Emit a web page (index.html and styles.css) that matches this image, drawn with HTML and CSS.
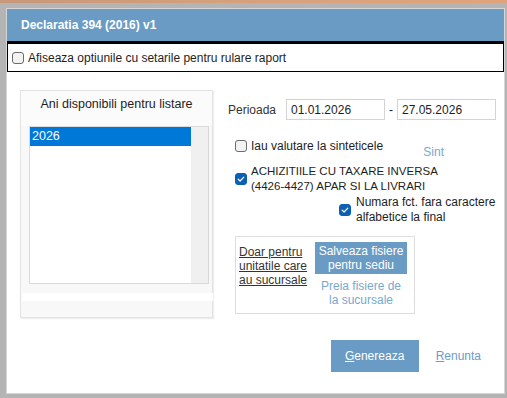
FILE: index.html
```html
<!DOCTYPE html>
<html lang="ro">
<head>
    <meta charset="UTF-8">
    <meta name="viewport" content="width=device-width, initial-scale=1.0">
    <title>Declaratia 394 (2016) v1</title>
    <link rel="stylesheet" href="styles.css">
</head>
<body>
    <div class="desk-strip"></div>
    <div class="window">
        <div class="titlebar">Declaratia 394 (2016) v1</div>

        <div class="options-row">
            <span class="cb"></span>
            <span>Afiseaza optiunile cu setarile pentru rulare raport</span>
        </div>

        <div class="dialog-body">
            <div class="main">
                <div class="years-panel">
                    <div class="panel-title">Ani disponibili pentru listare</div>
                    <div class="listbox">
                        <div class="list-items">
                            <div class="list-item selected">2026</div>
                        </div>
                        <div class="scroll-track"></div>
                    </div>
                    <div class="panel-strip"></div>
                </div>

                <div class="settings">
                    <div class="period-row">
                        <span class="period-label">Perioada</span>
                        <input class="date-input" type="text" value="01.01.2026">
                        <span class="dash">-</span>
                        <input class="date-input" type="text" value="27.05.2026">
                    </div>

                    <div class="check-row first">
                        <span class="cb"></span>
                        <span>Iau valutare la sinteticele</span>
                        <span class="sint">Sint</span>
                    </div>

                    <div class="check-row caps">
                        <span class="cb checked">
                            <svg viewBox="0 0 12 12" width="12" height="12"><path d="M3.2 6.2 L5.1 8 L8.8 4.2" fill="none" stroke="#fff" stroke-width="1.2" stroke-linecap="round" stroke-linejoin="round"/></svg>
                        </span>
                        <span>ACHIZITIILE CU TAXARE INVERSA<br>(4426-4427) APAR SI LA LIVRARI</span>
                    </div>

                    <div class="check-row numbering">
                        <span class="cb checked">
                            <svg viewBox="0 0 12 12" width="12" height="12"><path d="M3.2 6.2 L5.1 8 L8.8 4.2" fill="none" stroke="#fff" stroke-width="1.2" stroke-linecap="round" stroke-linejoin="round"/></svg>
                        </span>
                        <span>Numara fct. fara caractere<br>alfabetice la final</span>
                    </div>

                    <div class="branch-box">
                        <div class="branch-note">Doar pentru unitatile care au sucursale</div>
                        <div class="branch-actions">
                            <div class="save-btn">Salveaza fisiere<br>pentru sediu</div>
                            <div class="fetch-link">Preia fisiere de<br>la sucursale</div>
                        </div>
                    </div>
                </div>
            </div>

            <div class="actions">
                <button class="primary" type="button"><u>G</u>enereaza</button>
                <span class="cancel"><u>R</u>enunta</span>
            </div>
        </div>
    </div>
</body>
</html>
```

FILE: styles.css
```css
body {
    margin: 0;
    background-color: #b4b4b4;
    font-family: 'Liberation Sans', Arial, sans-serif;
    font-size: 12px;
    color: #1e1e1e;
    height: 398px;
    overflow: hidden;
}
.desk-strip {
    height: 3px;
    background: linear-gradient(to right, #c8987a, #d9a27c 60%, #e0a47c);
}
.window {
    margin: 5px 2px 0 6px;
    width: 497px;
    height: 384px;
    border: 1px solid #d6d6d6;
    background-color: #fff;
    display: flex;
    flex-direction: column;
}
.titlebar {
    height: 32px;
    background-color: #6a9bc4;
    color: #fff;
    font-weight: bold;
    font-size: 12px;
    line-height: 32px;
    padding-left: 14px;
    border-bottom: 3px solid #000;
}
.options-row {
    height: 27px;
    border: 1px solid #000;
    border-top: none;
    display: flex;
    align-items: center;
    gap: 4px;
    padding-left: 4px;
}
.cb {
    width: 10px;
    height: 10px;
    border: 1px solid #6b6b6b;
    border-radius: 3px;
    background-color: #f3f3f3;
    flex-shrink: 0;
    display: flex;
}
.cb.checked {
    border-color: #0b5fb4;
    background-color: #0b5fb4;
}
.cb.checked svg {
    margin: -1px;
}
.dialog-body {
    flex: 1;
    display: flex;
    flex-direction: column;
    padding: 18px 8px 0 13px;
}
.main {
    display: flex;
    gap: 15px;
}
.years-panel {
    width: 191px;
    height: 226px;
    flex-shrink: 0;
    border: 1px solid #e3e3e3;
    background-color: #f8f8f8;
    box-shadow: 1px 1px 1px #eee;
    display: flex;
    flex-direction: column;
}
.panel-title {
    height: 35px;
    padding-top: 6px;
    box-sizing: border-box;
    text-align: center;
    font-size: 12.5px;
    background-color: #fbfbfb;
}
.listbox {
    height: 156px;
    margin: 0 3px 0 8px;
    border: 1px solid #d9d9d9;
    background-color: #fff;
    display: flex;
}
.list-items {
    flex: 1;
}
.list-item {
    height: 19px;
    line-height: 19px;
    padding-left: 2px;
    font-size: 12.5px;
}
.list-item.selected {
    background-color: #0078d7;
    color: #fff;
}
.scroll-track {
    width: 17px;
    background-color: #f0f0f0;
}
.panel-strip {
    height: 8px;
    margin: 9px -1px 0 1px;
    background-color: #fff;
}
.settings {
    flex: 1;
    padding-top: 9px;
}
.period-row {
    display: flex;
    align-items: center;
    height: 21px;
}
.period-label {
    width: 58px;
    color: #333;
}
.date-input {
    width: 99px;
    height: 21px;
    box-sizing: border-box;
    border: 1px solid #d3d3d3;
    padding: 0 4px;
    font-family: inherit;
    font-size: 12px;
    color: #1e1e1e;
    outline: none;
}
.dash {
    width: 12px;
    text-align: center;
}
.check-row {
    display: flex;
    align-items: center;
    gap: 4px;
    margin-left: 7px;
    line-height: 15px;
}
.check-row.first {
    margin-top: 19px;
    align-items: flex-start;
}
.check-row.first .cb {
    margin-top: 1px;
}
.sint {
    margin-left: auto;
    margin-right: 52px;
    margin-top: 6px;
    color: #7aa7d0;
}
.check-row.caps {
    margin-top: 4px;
    font-size: 11.5px;
}
.check-row.numbering {
    margin-top: 1px;
    margin-left: 111px;
    gap: 5px;
}
.branch-box {
    margin: 11px 0 0 7px;
    width: 173px;
    height: 71px;
    border: 1px solid #dedede;
    display: flex;
    padding: 5px 2px 0 3px;
}
.branch-note {
    width: 76px;
    padding-top: 3px;
    line-height: 14px;
    text-decoration: underline;
    color: #333;
}
.branch-actions {
    width: 92px;
    text-align: center;
    line-height: 14px;
}
.save-btn {
    height: 32px;
    padding-top: 2px;
    box-sizing: border-box;
    background-color: #6a9bc4;
    color: #fff;
}
.fetch-link {
    margin-top: 5px;
    color: #7aa7d0;
}
.actions {
    margin-top: 22px;
    margin-right: 15px;
    display: flex;
    justify-content: flex-end;
    align-items: center;
    gap: 17px;
}
.primary {
    width: 88px;
    height: 32px;
    border: none;
    background-color: #6a9bc4;
    color: #fff;
    font-family: inherit;
    font-size: 12px;
}
.cancel {
    color: #6b9ccb;
    font-size: 12px;
}
```
